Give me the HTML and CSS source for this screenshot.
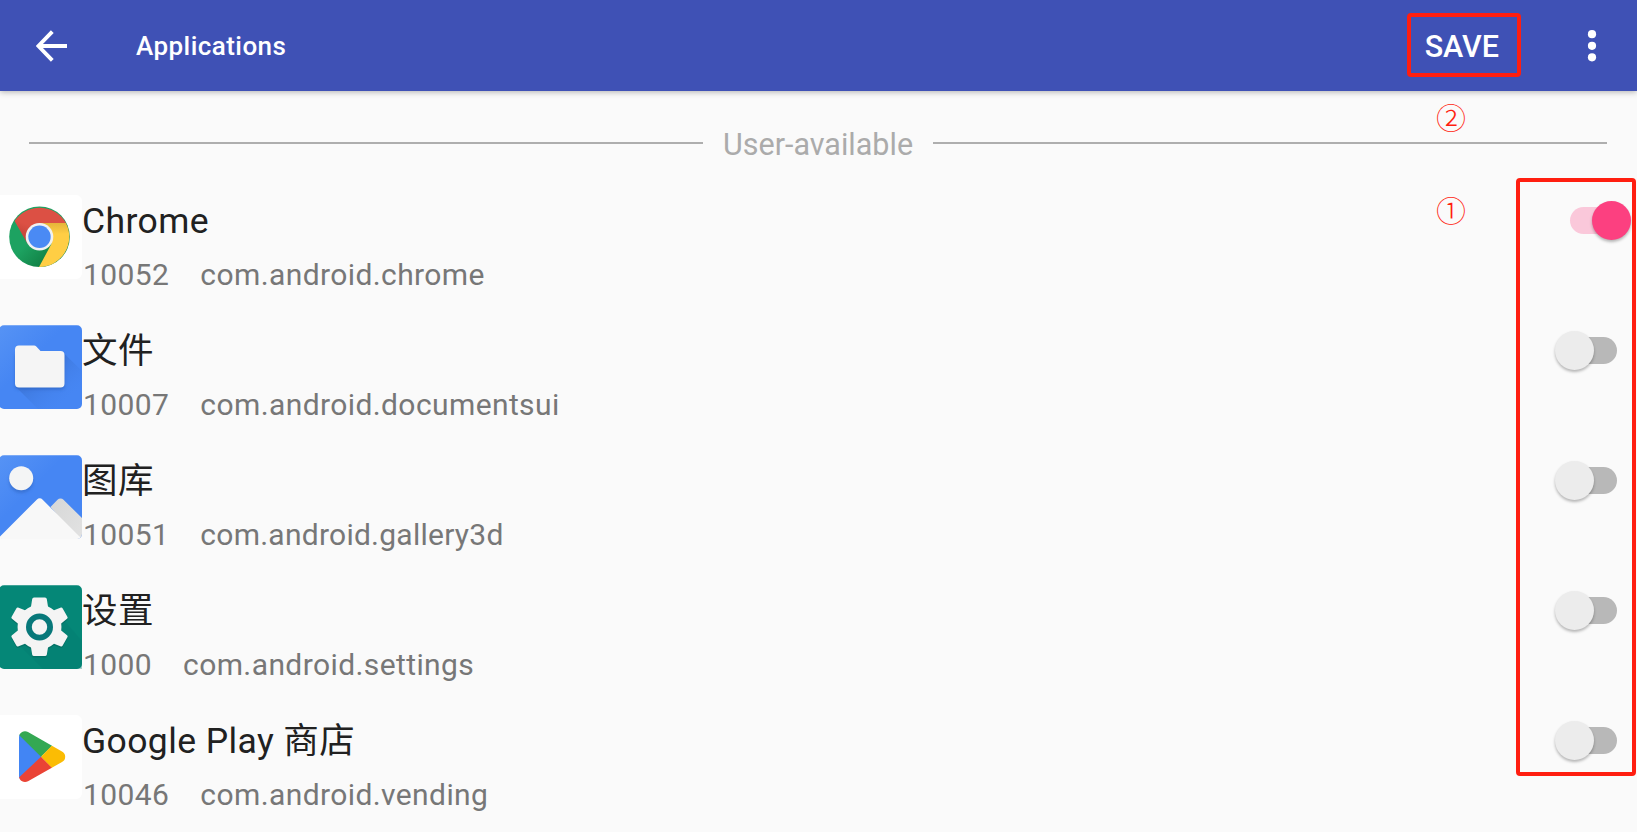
FILE: index.html
```
<!DOCTYPE html>
<html lang="zh-CN">
<head>
<meta charset="utf-8">
<title>Applications</title>
<link rel="stylesheet" href="styles.css">
</head>
<body>
<header class="bar">
  <svg class="back" viewBox="0 0 32 32"><path d="M31 16H3M16.3 1.7 2.4 16l13.9 14.3" fill="none" stroke="#fff" stroke-width="3.9"/></svg>
  <h1 class="title">Applications</h1>
  <button class="save">SAVE</button>
  <svg class="more" viewBox="0 0 10 34"><circle cx="5" cy="5.2" r="4.1"/><circle cx="5" cy="16.8" r="4.1"/><circle cx="5" cy="28.3" r="4.1"/></svg>
</header>
<main>
  <div class="divider"><span class="line"></span><span class="label">User-available</span><span class="line"></span></div>
  <ul class="apps">
    <li class="app">
      <svg class="icon" viewBox="0 0 82 84">
        <defs>
          <linearGradient id="cr" x1="0" y1="1" x2="0.6" y2="0"><stop offset="0" stop-color="#b43a30"/><stop offset=".5" stop-color="#dc5044"/></linearGradient>
          <linearGradient id="cg" x1="0" y1="0" x2="1" y2="1"><stop offset=".45" stop-color="#1da261"/><stop offset=".75" stop-color="#128246"/></linearGradient>
          <linearGradient id="cy" x1="0" y1="0" x2="0" y2="1"><stop offset="0" stop-color="#e5b43a"/><stop offset=".25" stop-color="#ffce44"/></linearGradient>
        </defs>
        <path d="M0 0H76a6 6 0 0 1 6 6V78a6 6 0 0 1-6 6H0z" fill="#fff"/>
        <circle cx="39.5" cy="41.8" r="30.3" fill="url(#cg)"/>
        <path d="M39.5 27.9H65.9A30.3 30.3 0 0 1 39 72.1L51.5 48.8z" fill="url(#cy)"/>
        <path d="M65.9 27.9H39.5L27.5 48.8 14.6 26A30.3 30.3 0 0 1 65.9 27.9z" fill="url(#cr)"/>
        <circle cx="39.5" cy="41.8" r="13.8" fill="#f1f1f1"/>
        <circle cx="39.5" cy="41.8" r="11.2" fill="#4a8af4"/>
      </svg>
      <div class="info"><p class="name">Chrome</p><p class="meta"><span>10052</span><span>com.android.chrome</span></p></div>
      <span class="switch on"><i class="thumb"></i></span>
    </li>
    <li class="app">
      <svg class="icon" viewBox="0 0 82 84">
        <defs>
          <linearGradient id="bl" x1="0" y1="0" x2="1" y2="1"><stop offset="0" stop-color="#5693f5"/><stop offset=".4" stop-color="#4686f3"/></linearGradient>
          <linearGradient id="sh" x1="0" y1="0" x2="1" y2="1"><stop offset=".4" stop-color="#26529f" stop-opacity=".22"/><stop offset=".8" stop-color="#3f78dd" stop-opacity="0"/></linearGradient>
          <filter id="soft" x="-50%" y="-50%" width="200%" height="200%"><feGaussianBlur stdDeviation="1.7"/></filter>
        </defs>
        <rect y=".2" x="-1" width="83" height="83.8" rx="5" fill="url(#bl)"/>
        <path d="M16 62 38 84H82V46L63.5 28z" fill="url(#sh)"/>
        <rect x="15" y="28" width="49.5" height="36.5" rx="4" fill="#2c60bb" opacity=".6" filter="url(#soft)"/>
        <path d="M19 20.5H34a3 3 0 0 1 2.3 1L40.5 26H60.5a4 4 0 0 1 4 4V58.5a4 4 0 0 1-4 4H19a4 4 0 0 1-4-4V24.5a4 4 0 0 1 4-4z" fill="#f5f5f5"/>
      </svg>
      <div class="info"><p class="name">文件</p><p class="meta"><span>10007</span><span>com.android.documentsui</span></p></div>
      <span class="switch"><i class="thumb"></i></span>
    </li>
    <li class="app">
      <svg class="icon" viewBox="0 0 82 84">
        <defs>
          <linearGradient id="mt" x1="0" y1="0" x2="1" y2="1"><stop offset="0" stop-color="#d6d7d7"/><stop offset="1" stop-color="#e2e2e2"/></linearGradient>
        </defs>
        <rect y=".2" x="-1" width="83" height="83.8" rx="5" fill="url(#bl)"/>
        <circle cx="21.2" cy="26" r="12" fill="#2b5fb8" opacity=".5" filter="url(#soft)"/>
        <circle cx="21.2" cy="23.2" r="12" fill="#f4f5f5"/>
        <path d="M50.5 52 57.5 44.8a4.200 4.200 0 0 1 6 0L82 63V79a5 5 0 0 1-5 5z" fill="url(#mt)"/>
        <path d="M0 81.5 36.7 44.7a4.3 4.3 0 0 1 6 0L80.5 82.6A5 5 0 0 1 77 84H2.5A5 5 0 0 1 0 83z" fill="#f8f8f8"/>
      </svg>
      <div class="info"><p class="name">图库</p><p class="meta"><span>10051</span><span class="tight">com.android.gallery3d</span></p></div>
      <span class="switch"><i class="thumb"></i></span>
    </li>
    <li class="app">
      <svg class="icon" viewBox="0 0 82 84">
        <rect y=".2" x="-1" width="83" height="83.8" rx="5" fill="#058777"/>
        <path d="M21 62 43 84H82V56L62 33z" fill="#04796f" opacity=".35"/>
        <g transform="translate(39.5 43.5)" fill="#045f57" opacity=".5"><use href="#gear"/></g>
        <g transform="translate(39.5 42)" fill="#f4f4f4"><path id="gear" d="M-5.5 -29.5H5.5Q7 -29.5 7.3 -28L8.5 -20.5Q12 -19 14.5 -16.8L21.5 -19.5Q22.5 -19.8 23.2 -18.5L28 -10Q28.5 -9 27.5 -8.2L21.7 -3.5Q22.2 0 21.7 3.5L27.5 8.2Q28.5 9 28 10L23.2 18.5Q22.5 19.8 21.5 19.5L14.5 16.8Q12 19 8.5 20.5L7.3 27.7Q7 29 5.5 29H-5.5Q-7 29 -7.3 27.7L-8.5 20.5Q-12 19 -14.5 16.8L-21.5 19.5Q-22.5 19.8 -23.2 18.5L-28 10Q-28.5 9 -27.5 8.2L-21.7 3.5Q-22.2 0 -21.7 -3.5L-27.5 -8.2Q-28.5 -9 -28 -10L-23.2 -18.5Q-22.5 -19.8 -21.5 -19.5L-14.5 -16.8Q-12 -19 -8.5 -20.5L-7.3 -28Q-7 -29.5 -5.5 -29.5z"/></g>
        <circle cx="39.5" cy="42" r="10.6" fill="#f4f4f4" stroke="#07787a" stroke-width="5.8"/>
      </svg>
      <div class="info"><p class="name">设置</p><p class="meta"><span>1000</span><span>com.android.settings</span></p></div>
      <span class="switch"><i class="thumb"></i></span>
    </li>
    <li class="app">
      <svg class="icon" viewBox="0 0 82 84">
        <defs><clipPath id="pl"><path d="M19 22a6 6 0 0 1 9-5L62 36.5a6 6 0 0 1 0 10.6L28 66.2a6 6 0 0 1-9-5z"/></clipPath></defs>
        <path d="M0 0H76a6 6 0 0 1 6 6V78a6 6 0 0 1-6 6H0z" fill="#fff"/>
        <g clip-path="url(#pl)">
          <path d="M18 18 42 41.8 18 65z" fill="#4285f4"/>
          <path d="M19 10H55V28L41 41.8 19 20z" fill="#34a853"/>
          <path d="M51.5 31H70V53H51.5L41 41.8z" fill="#fbbc04"/>
          <path d="M19 62.5 41 41.8 55 56V75H19z" fill="#ea4335"/>
        </g>
      </svg>
      <div class="info"><p class="name">Google Play 商店</p><p class="meta"><span>10046</span><span>com.android.vending</span></p></div>
      <span class="switch"><i class="thumb"></i></span>
    </li>
  </ul>
</main>
<div class="mark mark-save"></div>
<div class="mark mark-switches"></div>
<span class="step step-two">②</span>
<span class="step step-one">①</span>
</body>
</html>
```
FILE: styles.css
```
* { box-sizing: border-box; margin: 0; padding: 0; }
body {
  position: relative;
  width: 1637px;
  height: 832px;
  overflow: hidden;
  background: #fafafa;
  font-family: Roboto, "Noto Sans CJK SC", sans-serif;
}
.bar {
  display: flex;
  align-items: center;
  height: 91px;
  padding: 0 40px 0 36px;
  background: #3f51b5;
  color: #fff;
  box-shadow: 0 1px 6px rgba(0, 0, 0, .3);
}
.back { width: 32px; height: 32px; }
.title { margin-left: 68px; font-size: 26px; line-height: 36px; font-weight: 500; letter-spacing: .45px; }
.save {
  margin-left: auto;
  margin-right: 88px;
  padding-top: 2px;
  border: 0;
  background: none;
  color: #fff;
  font: 500 30.5px/40px Roboto, sans-serif;
}
.more { width: 10px; height: 34px; fill: #fff; }
.divider {
  display: flex;
  align-items: center;
  gap: 20px;
  height: 104px;
  padding: 0 30px 0 29px;
}
.line { flex: 1; height: 2px; background: #aeaeae; }
.label { padding-top: 4px; color: #ababab; font-size: 30.5px; line-height: 40px; }
.apps { list-style: none; }
.app { display: flex; height: 130px; }
.icon { width: 82px; height: 84px; flex: none; }
.info { flex: 1; padding-top: 1px; }
.name { height: 52px; color: #212121; font-size: 35.5px; line-height: 50px; letter-spacing: .4px; white-space: nowrap; }
.meta { display: flex; gap: 31px; padding-left: 1px; color: #777; font-size: 30px; line-height: 54px; letter-spacing: .4px; }
.tight { letter-spacing: .25px; }
.switch {
  display: flex;
  align-items: center;
  width: 47px;
  height: 27px;
  margin: 12px 20px 0 0;
  border-radius: 14px;
  background: #b8b8b8;
}
.thumb {
  flex: none;
  width: 39px;
  height: 39px;
  margin-left: -15px;
  border-radius: 50%;
  background: #ececec;
  box-shadow: 0 2px 3px rgba(0, 0, 0, .28);
}
.on { background: #fac8da; }
.on .thumb { margin-left: 22px; background: #fc4080; }
.mark { position: absolute; border: 4px solid #ff1e10; border-radius: 4px; }
.mark-save { left: 1407px; top: 13px; width: 114px; height: 64px; }
.mark-switches { left: 1516px; top: 178px; width: 120px; height: 598px; }
.step {
  position: absolute;
  left: 1436px;
  width: 30px;
  color: #ff1e10;
  font: 300 30px/30px "Noto Sans CJK SC", sans-serif;
  text-align: center;
}
.step-two { top: 101px; }
.step-one { top: 194px; }
```
